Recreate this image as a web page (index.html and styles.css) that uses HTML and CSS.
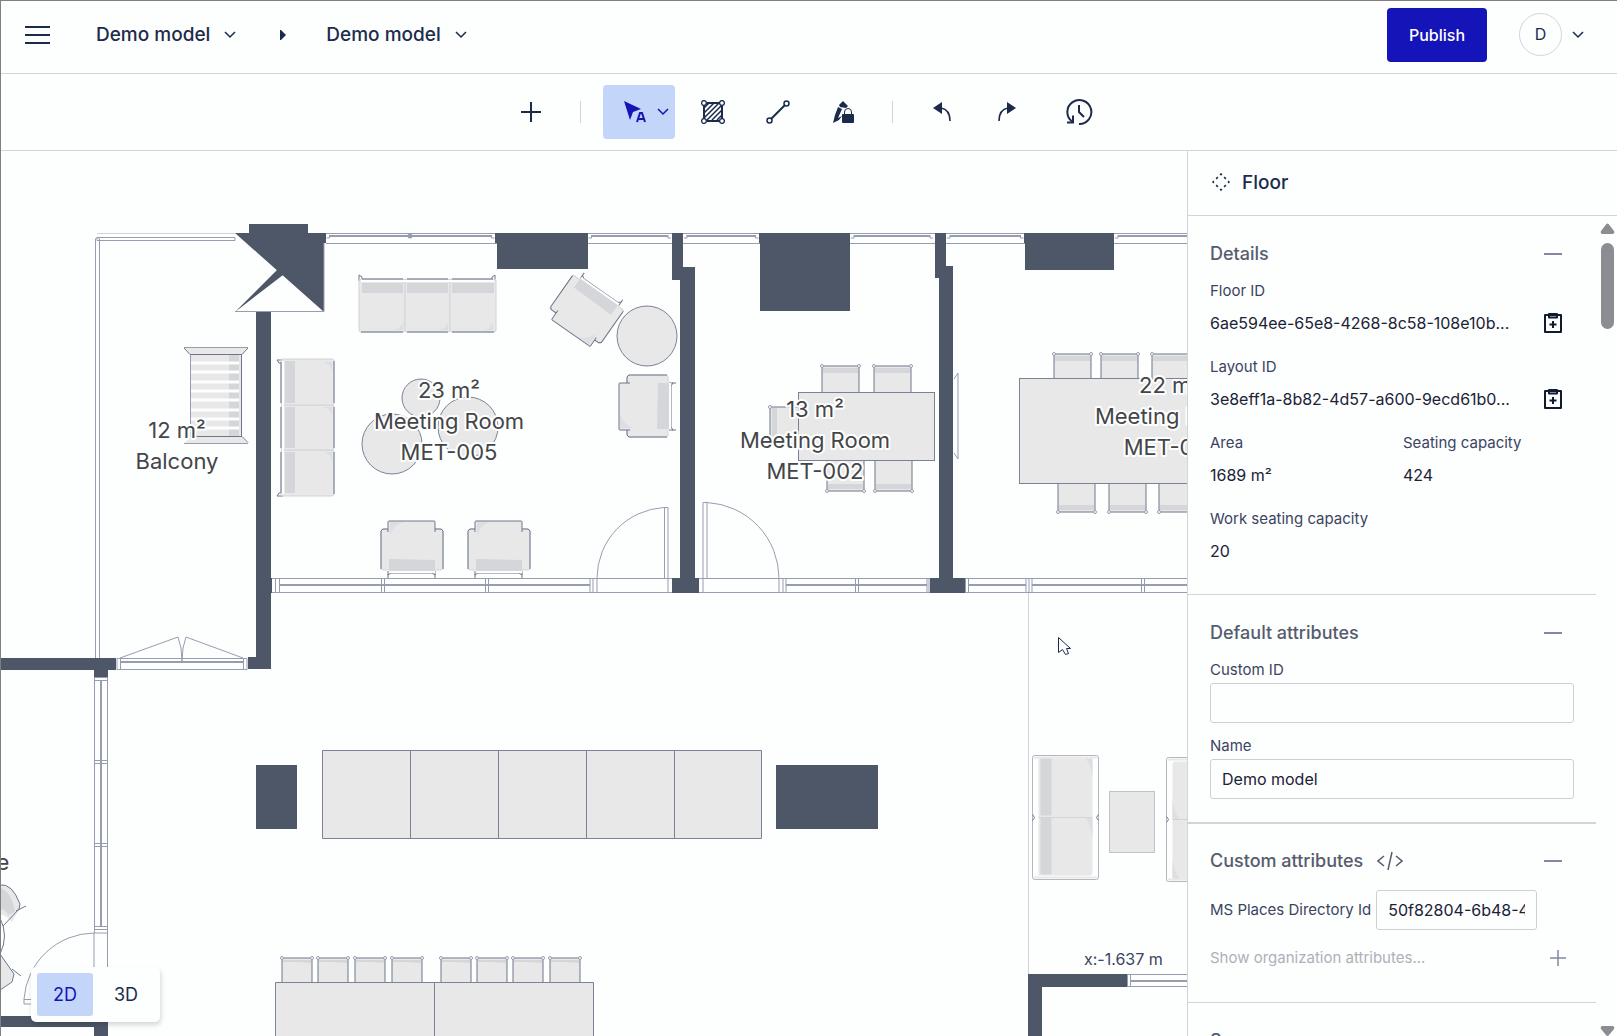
FILE: index.html
```html
<!DOCTYPE html>
<html lang="en">
<head>
    <meta charset="UTF-8">
    <meta name="viewport" content="width=device-width, initial-scale=1.0">
    <title>Demo model</title>
    <link rel="stylesheet" href="styles.css">
</head>
<body>
    <header class="topbar">
        <button class="icon-btn menu-btn" aria-label="Menu">
            <svg width="25" height="20" viewBox="0 0 25 20"><path d="M0 2h25M0 10h25M0 18h25" stroke="#1c2b4b" stroke-width="2"/></svg>
        </button>
        <button class="crumb">Demo model
            <svg class="chev" width="12" height="8" viewBox="0 0 12 8"><path d="M1 1l5 5 5-5"/></svg>
        </button>
        <svg class="crumb-arrow" width="6" height="10" viewBox="0 0 6 10"><path d="M0 0h1l5 5-5 5H0z" fill="#1c2b4b"/></svg>
        <button class="crumb">Demo model
            <svg class="chev" width="12" height="8" viewBox="0 0 12 8"><path d="M1 1l5 5 5-5"/></svg>
        </button>
        <button class="publish">Publish</button>
        <button class="account">
            <span class="avatar">D</span>
            <svg class="chev" width="12" height="8" viewBox="0 0 12 8"><path d="M1 1l5 5 5-5"/></svg>
        </button>
    </header>

    <nav class="toolbar">
        <button class="tool" aria-label="Add">
            <svg width="20" height="20" viewBox="0 0 20 20"><path d="M10 0v20M0 10h20" stroke="#1c2b4b" stroke-width="2"/></svg>
        </button>
        <span class="sep"></span>
        <button class="tool active" aria-label="Select">
            <svg width="24" height="24" viewBox="0 0 24 24">
                <path d="M1 1l17 8-8 3-3 8z" fill="#1414b8"/>
                <path d="M14 22l3-9h2l3 9M15 19h6" fill="none" stroke="#1414b8" stroke-width="2"/>
            </svg>
            <svg class="chev" width="12" height="8" viewBox="0 0 12 8"><path d="M1 1l5 5 5-5"/></svg>
        </button>
        <button class="tool" aria-label="Area">
            <svg width="24" height="24" viewBox="0 0 24 24" fill="none" stroke="#1c2b4b">
                <path d="M3 3h18v18H3z" stroke-width="2"/>
                <path d="M3 8l5-5M3 13L13 3M3 18L18 3M6 20L21 5M11 20l10-10M16 20l5-5" stroke-width="1.5"/>
                <g fill="#fdfefe" stroke-width="1.3"><circle cx="3" cy="3" r="2.4"/><circle cx="21" cy="3" r="2.4"/><circle cx="3" cy="21" r="2.4"/><circle cx="21" cy="21" r="2.4"/></g>
            </svg>
        </button>
        <button class="tool" aria-label="Line">
            <svg width="24" height="24" viewBox="0 0 24 24" fill="none" stroke="#1c2b4b">
                <path d="M5 19L19 5" stroke-width="2"/>
                <circle cx="3.500" cy="20.500" r="2.500" stroke-width="1.500"/><circle cx="20.500" cy="3.500" r="2.500" stroke-width="1.500"/>
            </svg>
        </button>
        <button class="tool" aria-label="Lock drawing">
            <svg width="24" height="24" viewBox="0 0 24 24">
                <path d="M8 5l4-4 5 5-2 2-6-1zM7 7l4 2-4 9 4-2-3 4-6 3 2-8z" fill="#1c2b4b"/>
                <rect x="11" y="14" width="12" height="9" rx="1" fill="#1c2b4b"/>
                <path d="M13.500 14v-2a3.500 3.500 0 0 1 7 0v2" fill="none" stroke="#1c2b4b"/>
            </svg>
        </button>
        <span class="sep"></span>
        <button class="tool" aria-label="Undo">
            <svg width="20" height="22" viewBox="0 0 20 22"><path d="M1 7l9-6v12z" fill="#1c2b4b"/><path d="M9 7c6 1 9 5 9 13" fill="none" stroke="#1c2b4b" stroke-width="1.600"/></svg>
        </button>
        <button class="tool" aria-label="Redo">
            <svg width="20" height="22" viewBox="0 0 20 22"><path d="M19 7l-9-6v12z" fill="#1c2b4b"/><path d="M11 7c-6 1-9 5-9 13" fill="none" stroke="#1c2b4b" stroke-width="1.600"/></svg>
        </button>
        <button class="tool history" aria-label="History">
            <svg width="28" height="28" viewBox="0 0 28 28" fill="none" stroke="#1c2b4b" stroke-width="2">
                <path d="M14 26a12 12 0 1 0-7-2.500M14 7v7l5 5"/><path d="M2 24.500h6v-7"/>
            </svg>
        </button>
    </nav>

    <main class="workspace">
        <section class="canvas">
            <svg class="plan" width="100%" height="100%">
                <defs>
                    <symbol id="sofa" overflow="visible">
                        <path d="M0 7L0 1l3 2v3h130v-3l3-2v6" class="out"/>
                        <rect x="0" y="5" width="46" height="53" rx="2" class="soft"/>
                        <rect x="46" y="5" width="45" height="53" rx="2" class="soft"/>
                        <rect x="91" y="5" width="46" height="53" rx="2" class="soft"/>
                        <path d="M3 9h41v10H3zM48 9h41v10H48zM93 9h42v10H93z" class="shade"/>
                        <path d="M44 48v8H34q8-1 10-8zM89 48v8H79q8-1 10-8zM134 48v8h-10q8-1 10-8z" class="hint"/>
                        <path d="M2 7h133" class="cream"/>
                        <path d="M2 58h42M48 58h41M93 58h42M3 5h41M48 5h41M93 5h41" class="out"/>
                    </symbol>
                    <symbol id="armchair" overflow="visible">
                        <rect x="1" y="9" width="8" height="41" rx="2" class="soft"/>
                        <rect x="54" y="9" width="9" height="41" rx="2" class="soft"/>
                        <rect x="8" y="1" width="47" height="50" rx="2" class="fill"/>
                        <path d="M8 12V2q0-1 1-1h45q1 0 1 1v10M1 49V11l2-2h5M63 49V11l-2-2h-6M8 51v4l3-2h41l3 2v-4M8 58v-4M55 58v-4" class="out"/>
                        <path d="M9 39l46 1v11H9z" class="shade"/>
                        <path d="M10 2h14Q14 4 10 16z" class="hint"/>
                        <path d="M9 52h46" class="cream"/>
                    </symbol>
                    <symbol id="seat" overflow="visible">
                        <rect x="1" y="1" width="37" height="32" class="fill"/>
                        <path d="M2 3h35v5H2z" class="shade"/>
                        <path d="M1 33V1h37v32" class="out"/>
                        <circle cx="1" cy="1" r="1.500" class="knob"/><circle cx="38" cy="1" r="1.500" class="knob"/>
                    </symbol>
                    <symbol id="stool" overflow="visible">
                        <rect x="1" y="1" width="30" height="26" class="fill"/>
                        <path d="M2 3h28v3l-14-1H2z" class="shade"/>
                        <path d="M1 27V1h30v26" class="out"/>
                        <circle cx="1" cy="1" r="1.500" class="knob"/><circle cx="31" cy="1" r="1.500" class="knob"/>
                    </symbol>
                    <symbol id="couch" overflow="visible">
                        <rect x="0" y="0" width="66" height="124" rx="2" class="couch"/>
                        <path d="M1 1h64v2H1zM1 121h64v2H1z" class="fill"/>
                        <path d="M6 3h51q3 0 3 3v56H6zM6 62h54v55q0 3-3 3H6z" class="fill"/>
                        <path d="M8 3h11v57H8zM8 62h11v57H8z" class="shade"/>
                        <path d="M60 3v20q-1-13-7-20zM60 62v22q-1-14-7-22z" class="hint"/>
                        <path d="M6 62h54" class="soft"/>
                        <path d="M0 59l2 3-2 3M66 59l-2 3 2 3" class="out"/>
                    </symbol>
                </defs>

                <!-- drawing units are window pixels, so shift by the canvas origin -->
                <g transform="translate(-1 -151)">
                    <!-- balcony railing -->
                    <path d="M97 233.500h138" class="faint"/>
                    <path d="M97 237.500h138v3H97zM95.500 658V239l2-2 2 2v419" class="line"/>

                    <!-- facade glazing -->
                    <path d="M326 233.500h861M326 243.500h861" class="line"/>
                    <path d="M330 236h161M592 236h76M687 236h69M854 236h76M950 236h71M1118 236h69" class="line thick"/>
                    <path d="M326.500 238h3v-3M491.500 235v3h3M588.500 238h3v-3M668 235v3h3M684 238h3v-3M755.500 235v3h3M851 238h3v-3M930 235v3h3M947 238h3v-3M1020.500 235v3h3M1115 238h3v-3" class="line"/>
                    <circle cx="410" cy="236" r="2.500" class="mark"/>

                    <!-- partition glazing -->
                    <path d="M272 578.500h400M272 592.500h400M699 578.500h231M699 592.500h231M965 578.500h222M965 592.500h222" class="line"/>
                    <path d="M279 585h311M786 585h141M969 585h57M1032 585h155" class="line thick"/>
                    <path d="M275.500 579v13M279.500 579v13M381.500 579v13M384.500 579v13M485.500 579v13M488.500 579v13M590 579v13M593 579v13M855.500 579v13M858.500 579v13M783 579v13M786 579v13M927 579v13M929 579v13M965.500 579v13M968.500 579v13M1026 579v13M1029 579v13M1032 579v13M1141.500 579v13M1144.500 579v13" class="line"/>
                    <path d="M1028.500 593v381" class="faint"/>

                    <!-- swing doors -->
                    <path d="M597 592v-14a71 71 0 0 1 67-70.500h4V592M664.500 508v70" class="line"/>
                    <path d="M703 592v-89.500h4a76 76 0 0 1 72 76V592M707 503v75" class="line"/>
                    <path d="M108 933h-14a71 71 0 0 0-70 66v5h70M24 999.500h70M94 933v83M107.500 933v83" class="line"/>

                    <!-- balcony door -->
                    <path d="M117 658.500h130v11H117zM120.500 658v11M243.500 658v11M120 658l58-21q4 10 4 24 0-14 4-24l57 21" class="line"/>
                    <path d="M120 662h123" class="line thick"/>

                    <!-- left corridor glazing -->
                    <path d="M94.500 677v256M107.500 677v256M94 677.500h14M94 680.500h14M94 760.500h14M94 763.500h14M94 843.500h14M94 846.500h14M94 926.500h14M94 929.500h14" class="line"/>
                    <path d="M101 680v246" class="line thick"/>

                    <!-- walls and columns -->
                    <g class="wall">
                        <path d="M235 233h14v-9h59v9h18v10h-2v69zM277 270l6 5-48 37z"/>
                        <path d="M256 312h15v357h-23v-12h8zM0 658h116v12h-8v7H94v-7H0z"/>
                        <path d="M495 233h93v36h-91v-26h-2zM759 233h91v78h-90v-68h-1zM1024 233h90v37h-89v-27h-1z"/>
                        <path d="M672 233h11v34h12v311h4v15h-27v-15h8V280h-8zM935 233h11v33h7v312h12v15h-35v-15h9V278h-4zM262 578h10v15h-10z"/>
                        <path d="M256 765h41v64h-41zM776 765h102v64H776z"/>
                        <path d="M1028 974h99v13h-85v60h-14zM0 1016h108v40H94v-29H0z"/>
                    </g>
                    <path d="M235 311.500h89V243" class="line"/>
                    <path d="M1127 974.500h60M1127 986.500h60M1127.500 974v12M1130.500 974v12" class="line"/>
                    <path d="M1131 981h56" class="line thick"/>

                    <!-- deck chair -->
                    <path d="M184 347.500h64l-6 7v83l6 6h-64l6-6v-83z" class="fill"/>
                    <path d="M229 355h10v82h-10z" class="shade"/>
                    <path d="M191 363h48M191 372h48M191 382h48M191 391h48M191 400h48M191 410h48M191 419h48M191 428h48" class="slat"/>
                    <path d="M184 347.500h64M184 443.500h64M190.500 354v83" class="line"/>
                    <path d="M184 348l6 6.500h52l6-6.500M241.500 354v83M190 436.500h52l6 6" class="out"/>

                    <!-- MET-005 -->
                    <use href="#sofa" x="359" y="274"/>
                    <use href="#sofa" transform="translate(276 496) rotate(-90)"/>
                    <use href="#armchair" x="380" y="520"/>
                    <use href="#armchair" x="467" y="520"/>
                    <use href="#armchair" transform="translate(618 438) rotate(-90)"/>
                    <use href="#armchair" transform="translate(587 309) rotate(215) translate(-32 -30)"/>
                    <circle cx="647" cy="336" r="30" class="table"/>
                    <circle cx="421" cy="398" r="19" class="table"/>
                    <circle cx="392" cy="444" r="30" class="table"/>
                    <circle cx="468" cy="427" r="30" class="table"/>

                    <!-- MET-002 -->
                    <use href="#seat" x="821" y="365"/>
                    <use href="#seat" x="873" y="365"/>
                    <use href="#seat" transform="translate(865 492) rotate(180)"/>
                    <use href="#seat" transform="translate(913 492) rotate(180)"/>
                    <use href="#seat" transform="translate(769 445) rotate(-90)"/>
                    <rect x="798.500" y="392.500" width="136" height="68" class="table"/>
                    <path d="M954 379l4-6v86l-4-6" class="line"/>

                    <!-- large meeting room -->
                    <use href="#seat" x="1053" y="353"/>
                    <use href="#seat" x="1100" y="353"/>
                    <use href="#seat" x="1151" y="353"/>
                    <use href="#seat" transform="translate(1096 513) rotate(180)"/>
                    <use href="#seat" transform="translate(1147 513) rotate(180)"/>
                    <use href="#seat" transform="translate(1197 513) rotate(180)"/>
                    <rect x="1019.500" y="378.500" width="200" height="105" class="table"/>

                    <!-- open area -->
                    <path d="M322.500 750.500h439v88h-439zM410.500 751v87M498.500 751v87M586.500 751v87M674.500 751v87" class="table"/>
                    <use href="#stool" x="281" y="957"/>
                    <use href="#stool" x="317" y="957"/>
                    <use href="#stool" x="354" y="957"/>
                    <use href="#stool" x="391" y="957"/>
                    <use href="#stool" x="440" y="957"/>
                    <use href="#stool" x="476" y="957"/>
                    <use href="#stool" x="512" y="957"/>
                    <use href="#stool" x="549" y="957"/>
                    <path d="M275.500 982.500h318v100h-318zM434.500 983v100" class="table"/>
                    <use href="#couch" x="1032.500" y="755.500"/>
                    <rect x="1109.500" y="791.500" width="45" height="61" class="couch-table"/>
                    <use href="#couch" transform="translate(1232.500 881.500) rotate(180)"/>

                    <!-- round table cut off by the left edge -->
                    <path d="M0 885q12-3 20 19l-1 6-7 12q-5-6-12-8z" class="fill"/>
                    <path d="M0 888q12 4 15 24l-7 3q-2-6-8-6z" class="shade"/>
                    <path d="M2 957l12 17-3 8-11 8v-30z" class="fill"/>
                    <path d="M0 885q12-2 20 19l-1 5-16 17M16 911l10-5M0 918q9 18 0 36l14 20-2 8-12 8M12 969l9 7" class="out"/>

                    <g class="room">
                        <text x="177" y="438">12 m²</text><text x="177" y="469">Balcony</text>
                        <text x="449" y="398">23 m²</text><text x="449" y="429">Meeting Room</text><text x="449" y="460">MET-005</text>
                        <text x="815" y="417">13 m²</text><text x="815" y="448">Meeting Room</text><text x="815" y="479">MET-002</text>
                        <text x="1170" y="393">22 m²</text><text x="1170" y="424">Meeting Room</text><text x="1170" y="455">MET-001</text>
                        <text x="3" y="870">e</text>
                    </g>
                    <text x="1084" y="965" class="coords">x:-1.637 m</text>
                    <path d="M1058.500 637.500v15l4-3 3 5 3-1-2-5h4z" class="pointer"/>
                </g>
            </svg>
            <div class="view-switch">
                <button class="view on">2D</button>
                <button class="view">3D</button>
            </div>
        </section>

        <aside class="panel">
            <div class="panel-head">
                <svg width="18" height="18" viewBox="0 0 18 18"><path d="M9 1l8 8-8 8-8-8z" fill="none" stroke="#1c2b4b" stroke-width="1.500" stroke-dasharray="2.500 3.157" stroke-dashoffset="1.250"/></svg>
                <h1>Floor</h1>
            </div>
            <div class="panel-body">
                <div class="sections">
                    <section class="details">
                        <div class="title-row">
                            <h2>Details</h2>
                            <button class="collapse" aria-label="Collapse details"></button>
                        </div>
                        <dl class="fields">
                            <div class="field wide">
                                <dt>Floor ID</dt>
                                <dd>6ae594ee-65e8-4268-8c58-108e10b...
                                    <button class="copy" aria-label="Copy floor ID"><svg width="20" height="22" viewBox="0 0 20 22"><path d="M2 3h16v17H2zM6 2h8v3.500H6zM10 9v7M6.500 12.500h7"/></svg></button>
                                </dd>
                            </div>
                            <div class="field wide">
                                <dt>Layout ID</dt>
                                <dd>3e8eff1a-8b82-4d57-a600-9ecd61b0...
                                    <button class="copy" aria-label="Copy layout ID"><svg width="20" height="22" viewBox="0 0 20 22"><path d="M2 3h16v17H2zM6 2h8v3.500H6zM10 9v7M6.500 12.500h7"/></svg></button>
                                </dd>
                            </div>
                            <div class="field"><dt>Area</dt><dd>1689 m²</dd></div>
                            <div class="field"><dt>Seating capacity</dt><dd>424</dd></div>
                            <div class="field wide"><dt>Work seating capacity</dt><dd>20</dd></div>
                        </dl>
                    </section>
                    <section class="defaults">
                        <div class="title-row">
                            <h2>Default attributes</h2>
                            <button class="collapse" aria-label="Collapse default attributes"></button>
                        </div>
                        <label for="customId">Custom ID</label>
                        <input type="text" id="customId">
                        <label for="name">Name</label>
                        <input type="text" id="name" value="Demo model">
                    </section>
                    <section class="customs">
                        <div class="title-row">
                            <h2>Custom attributes</h2>
                            <svg class="code" width="26" height="20" viewBox="0 0 26 20"><path d="M7 5l-6 5 6 5M19 5l6 5-6 5M15 1l-4 18"/></svg>
                            <button class="collapse" aria-label="Collapse custom attributes"></button>
                        </div>
                        <div class="attr-row">
                            <label for="msPlaces">MS Places Directory Id</label>
                            <input type="text" id="msPlaces" value="50f82804-6b48-4c1e-9d27">
                        </div>
                        <button class="org-row">Show organization attributes...
                            <svg width="16" height="16" viewBox="0 0 16 16"><path d="M8 0v16M0 8h16" stroke="#8189a0" stroke-width="1.500"/></svg>
                        </button>
                    </section>
                    <section>
                        <div class="title-row"><h2>Spaces</h2></div>
                    </section>
                </div>
                <div class="scrollbar">
                    <svg width="15" height="11" viewBox="0 0 15 11"><path d="M2 11h11q2-1 1-3L9 1.500q-1.500-2-3 0L1 8q-1 2 1 3z" fill="#8c8d92"/></svg>
                    <span class="thumb"></span>
                    <svg class="down" width="15" height="11" viewBox="0 0 15 11"><path d="M2 1h11q2 1 1 3l-5 6q-1.500 2-3 0L1 4q-1-2 1-3z" fill="#8c8d92"/></svg>
                </div>
            </div>
        </aside>
    </main>
</body>
</html>
```
FILE: styles.css
```css
* {
    box-sizing: border-box;
}
body {
    margin: 0;
    height: 100vh;
    overflow: hidden;
    display: flex;
    flex-direction: column;
    border-top: 1px solid #808080;
    border-left: 1px solid #808080;
    background: #fdfefe;
    color: #1c2b4b;
    font-family: Inter, "Liberation Sans", sans-serif;
    font-size: 16px;
}
button {
    padding: 0;
    border: none;
    background: none;
    color: inherit;
    font: inherit;
    cursor: pointer;
}
h1, h2, dl, dd {
    margin: 0;
}
svg {
    flex: none;
}
.chev {
    fill: none;
    stroke: currentColor;
    stroke-width: 1.5;
}

/* top bar */
.topbar {
    flex: none;
    display: flex;
    align-items: center;
    height: 73px;
    padding: 0 33px 5px 24px;
    border-bottom: 1px solid #d3d4d8;
}
.menu-btn {
    display: flex;
    margin-right: 46px;
}
.crumb {
    display: flex;
    align-items: center;
    gap: 14px;
    font-size: 19px;
    font-weight: 500;
}
.crumb-arrow {
    margin: 0 40px 0 44px;
}
.publish {
    height: 54px;
    width: 100px;
    margin-left: auto;
    border-radius: 4px;
    background: #1414b8;
    color: #fff;
    font-weight: 500;
}
.account {
    display: flex;
    align-items: center;
    gap: 10px;
    margin-left: 32px;
}
.avatar {
    width: 43px;
    height: 43px;
    border: 1px solid #d3d4d8;
    border-radius: 50%;
    line-height: 41px;
}

/* toolbar */
.toolbar {
    flex: none;
    display: flex;
    align-items: center;
    justify-content: center;
    gap: 11px;
    height: 77px;
    padding-right: 9px;
    border-bottom: 1px solid #d3d4d8;
}
.tool {
    display: flex;
    align-items: center;
    justify-content: center;
    width: 54px;
    height: 54px;
    border-radius: 4px;
}
.tool.active {
    width: 72px;
    gap: 10px;
    padding-left: 14px;
    background: #c3d5f9;
    color: #1414b8;
}
.history {
    margin-left: 7px;
}
.sep {
    width: 1px;
    height: 22px;
    margin: 0 11px;
    background: #d3d4d8;
}

/* floor plan */
.workspace {
    flex: 1;
    min-height: 0;
    display: flex;
}
.canvas {
    position: relative;
    flex: 1;
    min-width: 0;
    overflow: hidden;
}
.plan {
    display: block;
}
.wall { fill: #4e5768; }
.line { fill: none; stroke: #979dae; }
.thick { stroke-width: 2; }
.faint { fill: none; stroke: #d3d4d8; }
.mark { fill: #979dae; }
.fill { fill: #e8e8e8; }
.soft { fill: #e8e8e8; stroke: #d3d4d8; }
.shade { fill: #d5d6da; }
.hint { fill: #dcdee3; }
.cream { stroke: #fdfefe; stroke-width: 2; }
.out { fill: none; stroke: #6d768c; }
.knob { fill: #fdfefe; stroke: #979dae; }
.slat { stroke: #fdfefe; stroke-width: 3; }
.table { fill: #e8e8e8; stroke: #7b8296; }
.couch { fill: #fdfefe; stroke: #b3b7c2; }
.couch-table { fill: #e8e8e8; stroke: #c0c2c9; }
.pointer { fill: #fdfefe; stroke: #1c2b4b; }
.room {
    fill: #444548;
    stroke: #fdfefe;
    stroke-width: 4px;
    stroke-linejoin: round;
    paint-order: stroke;
    font-size: 22px;
    text-anchor: middle;
}
.coords {
    fill: #3b4461;
}
.view-switch {
    position: absolute;
    left: 30px;
    bottom: 14px;
    display: flex;
    gap: 5px;
    padding: 6px;
    border-radius: 5px;
    background: #fdfefe;
    box-shadow: 1px 3px 5px rgba(0, 0, 0, 0.16);
}
.view {
    width: 56px;
    height: 43px;
    border-radius: 3px;
    font-size: 18px;
}
.view.on {
    background: #c3d5f9;
    color: #1414b8;
}

/* side panel */
.panel {
    flex: none;
    display: flex;
    flex-direction: column;
    width: 430px;
    border-left: 1px solid #d3d4d8;
}
.panel-head {
    flex: none;
    display: flex;
    align-items: center;
    gap: 12px;
    height: 65px;
    padding: 0 0 2px 24px;
    border-bottom: 1px solid #d3d4d8;
}
.panel-head h1 {
    font-size: 19px;
    font-weight: 500;
}
.panel-body {
    flex: 1;
    min-height: 0;
    display: flex;
}
.sections {
    flex: 1;
    min-width: 0;
    overflow: hidden;
}
.sections section {
    padding: 26px 22px 30px;
    border-bottom: 1px solid #d3d4d8;
}
.title-row {
    display: flex;
    align-items: center;
    margin-bottom: 15px;
}
.title-row h2 {
    color: #555c6c;
    font-size: 18px;
    font-weight: 500;
    line-height: 24px;
}
.collapse {
    width: 42px;
    height: 24px;
    margin-left: auto;
}
.collapse::before {
    content: "";
    display: block;
    width: 18px;
    height: 2px;
    margin: 0 auto;
    background: #8189a0;
}
.fields {
    display: grid;
    grid-template-columns: 193px 1fr;
    row-gap: 22px;
}
.wide {
    grid-column: 1 / -1;
}
dt, label {
    display: block;
    color: #3b4461;
    font-size: 15px;
    line-height: 20px;
}
dd {
    display: flex;
    align-items: center;
    justify-content: space-between;
    height: 24px;
    margin-top: 10px;
    line-height: 24px;
}
dd, input {
    color: #1b2236;
}
.copy {
    display: flex;
    justify-content: center;
    width: 42px;
}
.copy svg {
    fill: none;
    stroke: #111a2e;
    stroke-width: 2;
    stroke-linejoin: round;
}
input {
    width: 100%;
    height: 40px;
    padding: 0 11px;
    border: 1px solid #cfd0d5;
    border-radius: 3px;
    background: #fdfefe;
    font: inherit;
}
.defaults input {
    display: block;
    margin: 3px 0 13px;
}
.sections .details {
    padding-bottom: 31px;
}
.sections .defaults {
    padding-bottom: 10px;
    border-bottom-width: 2px;
}
.sections .customs {
    padding-top: 25px;
    padding-bottom: 32px;
}
.code {
    margin-left: 14px;
    fill: none;
    stroke: #555c6c;
    stroke-width: 1.5;
}
.attr-row {
    display: flex;
    align-items: center;
    gap: 5px;
    padding: 2px 37px 0 0;
}
.attr-row label {
    flex: none;
}
.attr-row input {
    flex: 1;
    min-width: 0;
}
.org-row {
    display: flex;
    align-items: center;
    justify-content: space-between;
    width: 100%;
    margin-top: 16px;
    padding-right: 8px;
    color: #adb0b9;
    font-size: 15px;
    line-height: 24px;
}
.scrollbar {
    flex: none;
    display: flex;
    flex-direction: column;
    align-items: center;
    width: 21px;
    padding: 7px 2px 0 4px;
}
.thumb {
    width: 13px;
    height: 86px;
    margin-top: 9px;
    border-radius: 7px;
    background: #8c8d92;
}
.down {
    margin-top: auto;
}
```
